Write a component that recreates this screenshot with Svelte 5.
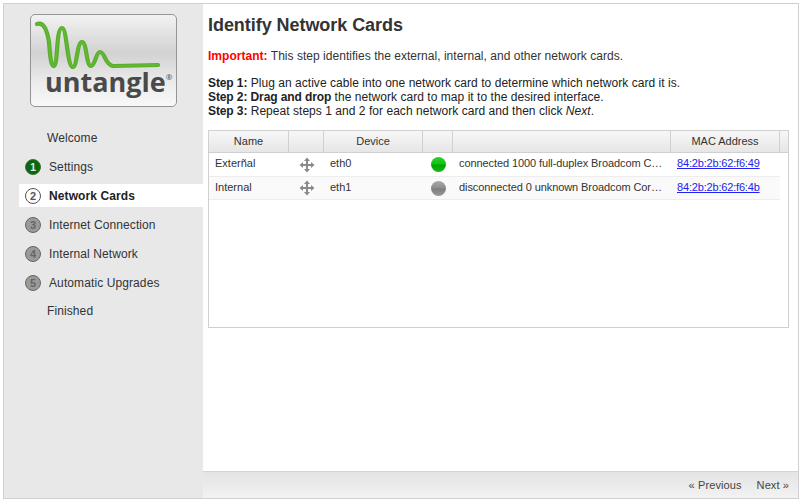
<script>
  const steps = [
    { label: 'Welcome' },
    { label: 'Settings', num: 1, state: 'done' },
    { label: 'Network Cards', num: 2, state: 'current' },
    { label: 'Internet Connection', num: 3, state: 'todo' },
    { label: 'Internal Network', num: 4, state: 'todo' },
    { label: 'Automatic Upgrades', num: 5, state: 'todo' },
    { label: 'Finished' }
  ];

  const cards = [
    { name: 'Exterñal', device: 'eth0', up: true, status: 'connected 1000 full-duplex Broadcom C…', mac: '84:2b:2b:62:f6:49' },
    { name: 'Internal', device: 'eth1', up: false, status: 'disconnected 0 unknown Broadcom Cor…', mac: '84:2b:2b:62:f6:4b' }
  ];

  const wave = 'M37 24 C44 22 47 30 49 42 C50 55 51 67 54 66 C58 65 56 28 62 28 C67 28 67 67 73 67 C77 67 77 42 82 42 C87 42 86 66 91 66 C95 66 96 52 100 52 C105 52 105 65 113 66 L158 65';
</script>

<div class="wizard">
  <aside class="sidebar">
    <div class="logo">
      <svg class="wave" viewBox="31 15 145 58" width="145" height="58" aria-hidden="true">
        <path d={wave} fill="none" stroke="#58ad2c" stroke-width="4.2" stroke-linecap="round" />
        <path d={wave} fill="none" stroke="#64b832" stroke-width="1.8" stroke-linecap="round" />
      </svg>
      <div class="wordmark">untangle<sup>®</sup></div>
    </div>

    <ul class="steps">
      {#each steps as step}
        <li class="step {step.state ?? 'plain'}">
          {#if step.num}
            <span class="badge">{step.num}</span>
          {/if}
          <span>{step.label}</span>
        </li>
      {/each}
    </ul>
  </aside>

  <main class="main">
    <div class="content">
      <h1>Identify Network Cards</h1>
      <p class="note"><strong class="important">Important:</strong> This step identifies the external, internal, and other network cards.</p>
      <p class="instructions">
        <strong>Step 1:</strong> Plug an active cable into one network card to determine which network card it is.<br />
        <strong>Step 2: Drag and drop</strong> the network card to map it to the desired interface.<br />
        <strong>Step 3:</strong> Repeat steps 1 and 2 for each network card and then click <em>Next</em>.
      </p>

      <div class="grid">
        <div class="row head">
          <div class="c-name">Name</div>
          <div class="c-drag"></div>
          <div class="c-device">Device</div>
          <div class="c-dot"></div>
          <div class="c-status"></div>
          <div class="c-mac">MAC Address</div>
          <div class="c-rest"></div>
        </div>
        {#each cards as card}
          <div class="row body">
            <div class="c-name left">{card.name}</div>
            <div class="c-drag">
              <svg viewBox="0 0 16 16" width="16" height="16" aria-hidden="true">
                <path d="M8 2v12M2 8h12" stroke="#8a8a8a" stroke-width="2" fill="none" />
                <path d="M8 0.5 11 4H5ZM8 15.5 11 12H5ZM0.5 8 4 5V11ZM15.5 8 12 5V11Z" fill="#8a8a8a" />
              </svg>
            </div>
            <div class="c-device left">{card.device}</div>
            <div class="c-dot"><span class="led" class:up={card.up}></span></div>
            <div class="c-status left">{card.status}</div>
            <div class="c-mac left"><a href="#mac">{card.mac}</a></div>
          </div>
        {/each}
      </div>
    </div>

    <footer class="footer">
      <span>« Previous</span>
      <span>Next »</span>
    </footer>
  </main>
</div>

<style>
  :global(body) {
    margin: 0;
    background: #fff;
  }

  .wizard {
    box-sizing: border-box;
    display: flex;
    width: 796px;
    height: 496px;
    margin: 3px 0 0 3px;
    border: 1px solid #d0d0d0;
    font-family: "Liberation Sans", Arial, sans-serif;
    font-size: 12px;
    color: #333;
  }

  .sidebar {
    flex: 0 0 199px;
    background: #e8e8e8;
  }

  .logo {
    box-sizing: border-box;
    width: 147px;
    height: 93px;
    margin: 10px 0 0 26px;
    border: 1px solid #949494;
    border-radius: 5px;
    background: linear-gradient(#f2f2f2, #d2d2d2 42%, #ececec 75%, #f8f8f8);
  }

  .wave {
    display: block;
  }

  .wordmark {
    margin: -5px 0 0 14px;
    font-family: "Open Sans", sans-serif;
    font-size: 27px;
    font-weight: 700;
    line-height: 28px;
    color: #4a4a4a;
  }

  .wordmark sup {
    font-size: 8px;
    font-weight: 400;
    vertical-align: 12px;
    line-height: 0;
  }

  .steps {
    list-style: none;
    margin: 19px 0 0;
    padding: 0 0 0 15px;
    letter-spacing: 0.1px;
  }

  .step {
    display: flex;
    align-items: center;
    gap: 8px;
    height: 23px;
    margin-bottom: 6px;
    padding-left: 6px;
  }

  .step.plain {
    padding-left: 28px;
  }

  .step:last-child {
    margin-top: -1px;
  }

  .step.current {
    background: #fff;
    font-weight: bold;
    color: #222;
  }

  .badge {
    box-sizing: border-box;
    display: flex;
    align-items: center;
    justify-content: center;
    flex: none;
    width: 16px;
    height: 16px;
    border-radius: 50%;
    font-size: 11px;
    font-weight: bold;
    letter-spacing: 0;
  }

  .done .badge {
    background: #0f640f;
    border: 1px solid #2f7a2f;
    color: #d8ecd8;
  }

  .current .badge {
    background: #fff;
    border: 1.5px solid #555;
    color: #555;
  }

  .todo .badge {
    background: #9a9a9a;
    border: 1.5px solid #666;
    color: #666;
  }

  .main {
    flex: 1;
    display: flex;
    flex-direction: column;
    min-width: 0;
  }

  .content {
    flex: 1;
    padding: 0 9px 0 5px;
  }

  h1 {
    margin: 10px 0 0;
    font-size: 18px;
    line-height: 22px;
    letter-spacing: -0.05px;
    color: #333;
  }

  .note {
    margin: 13px 0 0;
    line-height: 14px;
    letter-spacing: 0.03px;
  }

  .important {
    color: #f00;
  }

  .instructions {
    margin: 13px 0 0;
    line-height: 14px;
    letter-spacing: 0.04px;
    color: #222;
  }

  .instructions strong {
    letter-spacing: -0.1px;
  }

  .grid {
    box-sizing: border-box;
    height: 198px;
    margin-top: 12px;
    border: 1px solid #d0d0d0;
    font-size: 11px;
  }

  .row {
    display: flex;
    width: 571px;
  }

  .head {
    width: auto;
    height: 21px;
    background: linear-gradient(#f7f7f7, #e6e6e6);
    border-bottom: 1px solid #d0d0d0;
    line-height: 21px;
    text-align: center;
  }

  .head > div {
    box-sizing: border-box;
    border-right: 1px solid #d0d0d0;
  }

  .body {
    height: 22px;
    line-height: 20px;
    border-bottom: 1px solid #ededed;
  }

  .head + .body {
    height: 23px;
  }

  .body + .body {
    background: #fafafa;
  }

  .left {
    box-sizing: border-box;
    padding-left: 6px;
  }

  .c-name { flex: 0 0 80px; }
  .c-drag { flex: 0 0 35px; display: flex; align-items: center; justify-content: center; }
  .c-device { flex: 0 0 99px; }
  .c-dot { flex: 0 0 30px; display: flex; align-items: center; justify-content: center; }
  .c-status { flex: 0 0 218px; white-space: nowrap; letter-spacing: -0.09px; }
  .c-mac { flex: 0 0 109px; }
  .c-rest { flex: 1; }
  .head .c-rest { border-right: 0; }

  .led {
    width: 15px;
    height: 15px;
    border-radius: 50%;
    background: linear-gradient(#a8a8a8, #8e8e8e 45%, #7e7e7e 52%, #9a9a9a);
  }

  .led.up {
    background: linear-gradient(#2fd02f, #10c410 45%, #00a400 55%, #16b816);
  }

  a {
    color: #2222ee;
    letter-spacing: -0.18px;
  }

  .footer {
    display: flex;
    justify-content: flex-end;
    gap: 15px;
    height: 27px;
    padding-right: 9px;
    box-sizing: border-box;
    background: linear-gradient(#e4e4e4, #f2f2f2);
    border-top: 1px solid #d4d4d4;
    font-size: 11px;
    line-height: 27px;
    letter-spacing: 0.1px;
    color: #444;
  }
</style>
